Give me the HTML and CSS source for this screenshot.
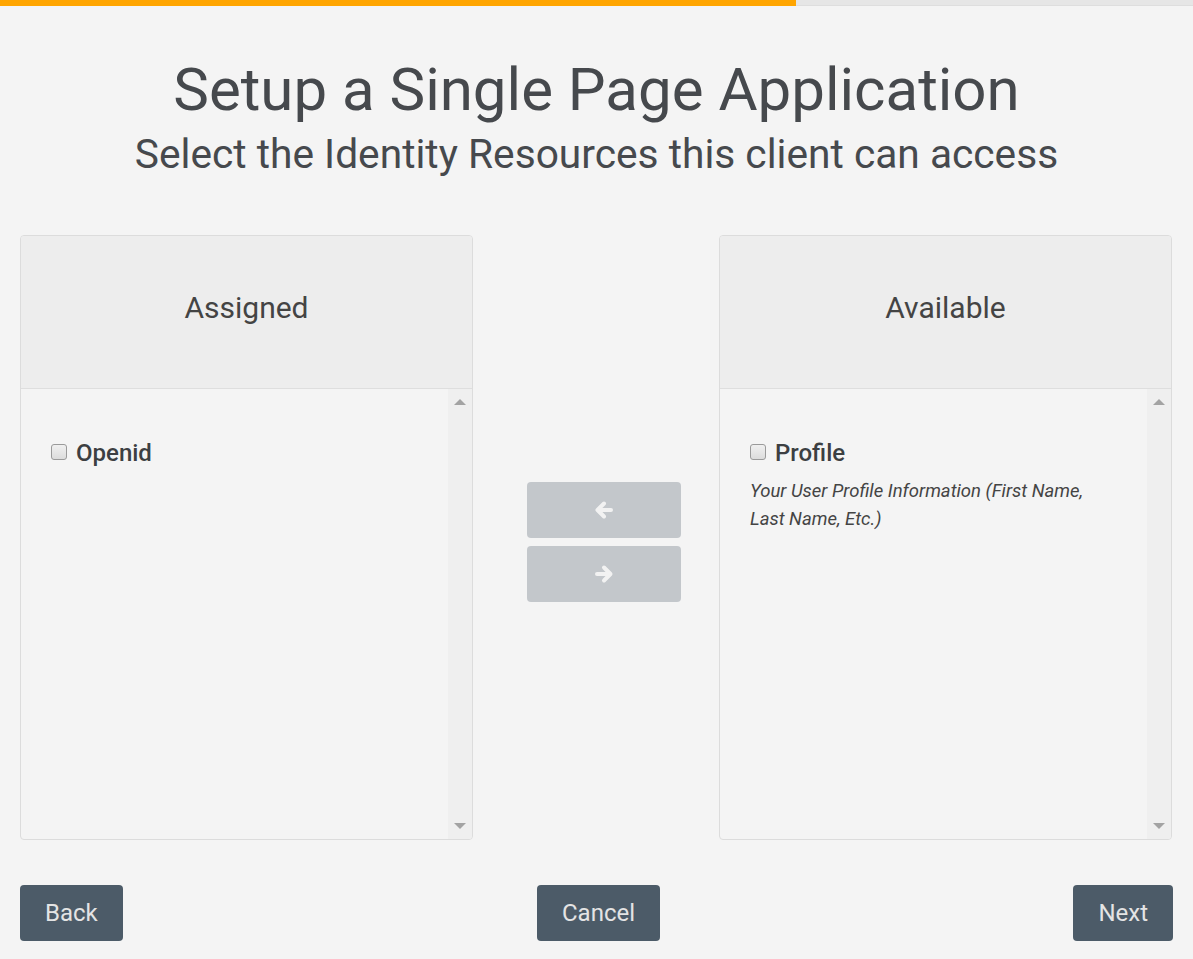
FILE: index.html
```html
<!DOCTYPE html>
<html>
<head>
<meta charset="utf-8">
<link rel="stylesheet" href="styles.css">
</head>
<body>
<div class="progress"><div class="progress-fill"></div></div>
<header class="heading">
  <h1 class="title">Setup a Single Page Application</h1>
  <h2 class="subtitle">Select the Identity Resources this client can access</h2>
</header>
<main class="lists">
  <section class="panel">
    <div class="panel-head">Assigned</div>
    <div class="panel-body">
      <div class="panel-content">
        <label class="item"><span class="check"></span><span class="item-name">Openid</span></label>
      </div>
      <div class="scroll"><span class="tri up"></span><span class="tri down"></span></div>
    </div>
  </section>
  <div class="movers">
    <button class="move">
      <svg width="20" height="20" viewBox="0 0 20 20"><path d="M17 10H4M10 3.5L3.5 10L10 16.5" fill="none" stroke="#f2f2f2" stroke-width="4" stroke-linecap="round" stroke-linejoin="round"/></svg>
    </button>
    <button class="move">
      <svg width="20" height="20" viewBox="0 0 20 20"><path d="M3 10H16M10 3.5L16.5 10L10 16.5" fill="none" stroke="#f2f2f2" stroke-width="4" stroke-linecap="round" stroke-linejoin="round"/></svg>
    </button>
  </div>
  <section class="panel">
    <div class="panel-head">Available</div>
    <div class="panel-body">
      <div class="panel-content">
        <label class="item"><span class="check"></span><span class="item-name">Profile</span></label>
        <p class="desc">Your User Profile Information (First Name, Last Name, Etc.)</p>
      </div>
      <div class="scroll"><span class="tri up"></span><span class="tri down"></span></div>
    </div>
  </section>
</main>
<footer class="actions">
  <div class="act-left"><button class="btn">Back</button></div>
  <div class="act-mid"><button class="btn btn-cancel">Cancel</button></div>
  <div class="act-right"><button class="btn">Next</button></div>
</footer>
</body>
</html>
```
FILE: styles.css
```css
* { box-sizing: border-box; }
html, body { margin: 0; padding: 0; }
body {
  background: #f4f4f4;
  font-family: Roboto, "Liberation Sans", sans-serif;
  color: #46494d;
  height: 959px;
  overflow: hidden;
}
.progress {
  height: 6px;
  background: #e6e6e6;
  border-bottom: 1px solid #dedede;
}
.progress-fill {
  width: 796px;
  height: 6px;
  background: #ffa500;
}
.heading {
  text-align: center;
  padding-top: 49px;
}
.title {
  margin: 0;
  font-size: 60px;
  font-weight: 400;
  line-height: 70px;
}
.subtitle {
  margin: 0;
  font-size: 40.7px;
  font-weight: 400;
  line-height: 58px;
}
.lists {
  display: grid;
  grid-template-columns: 453px 1fr 453px;
  padding: 0 21px 0 20px;
  margin-top: 52px;
  height: 605px;
}
.panel {
  border: 1px solid #dcdcdc;
  border-radius: 4px;
  display: flex;
  flex-direction: column;
  overflow: hidden;
}
.panel-head {
  height: 153px;
  flex: none;
  background: #ededed;
  border-bottom: 1px solid #dedede;
  display: flex;
  align-items: center;
  justify-content: center;
  padding-bottom: 9px;
  font-size: 30px;
  color: #444;
}
.panel-body {
  flex: 1;
  display: flex;
}
.panel-content {
  flex: 1;
  padding: 50px 30px 0 30px;
}
.scroll {
  width: 24px;
  background: #efefef;
  position: relative;
}
.tri {
  position: absolute;
  left: 6px;
  width: 0;
  height: 0;
  border-left: 6px solid transparent;
  border-right: 6px solid transparent;
}
.tri.up { top: 10px; border-bottom: 6px solid #a3a3a3; }
.tri.down { bottom: 10px; border-top: 6px solid #a3a3a3; }
.item {
  display: flex;
  align-items: center;
  gap: 9px;
}
.check {
  width: 16px;
  height: 16px;
  border: 1px solid #9a9a9a;
  border-radius: 3px;
  background: linear-gradient(#f0f0f0, #dcdcdc);
  margin-top: -2px;
}
.item-name {
  font-size: 24px;
  font-weight: 500;
  color: #3c3f42;
  line-height: 28px;
}
.desc {
  margin: 10px 0 0 0;
  font-size: 18.5px;
  font-style: italic;
  line-height: 28px;
  color: #444;
  padding-right: 20px;
}
.movers {
  display: flex;
  flex-direction: column;
  align-items: center;
  justify-content: center;
  gap: 8px;
  padding-left: 15px;
  padding-top: 8px;
}
.move {
  width: 154px;
  height: 56px;
  border: none;
  border-radius: 4px;
  background: #c3c7cb;
  display: flex;
  align-items: center;
  justify-content: center;
  padding: 0;
}
.actions {
  display: grid;
  grid-template-columns: 1fr auto 1fr;
  padding: 0 20px;
  margin-top: 45px;
}
.act-right { display: flex; justify-content: flex-end; }
.act-mid { padding-left: 4px; }
.btn {
  height: 56px;
  padding: 0 25px;
  border: none;
  border-radius: 4px;
  background: #4c5b68;
  color: #e4e4e4;
  font-family: Roboto, "Liberation Sans", sans-serif;
  font-size: 24px;
}
```
